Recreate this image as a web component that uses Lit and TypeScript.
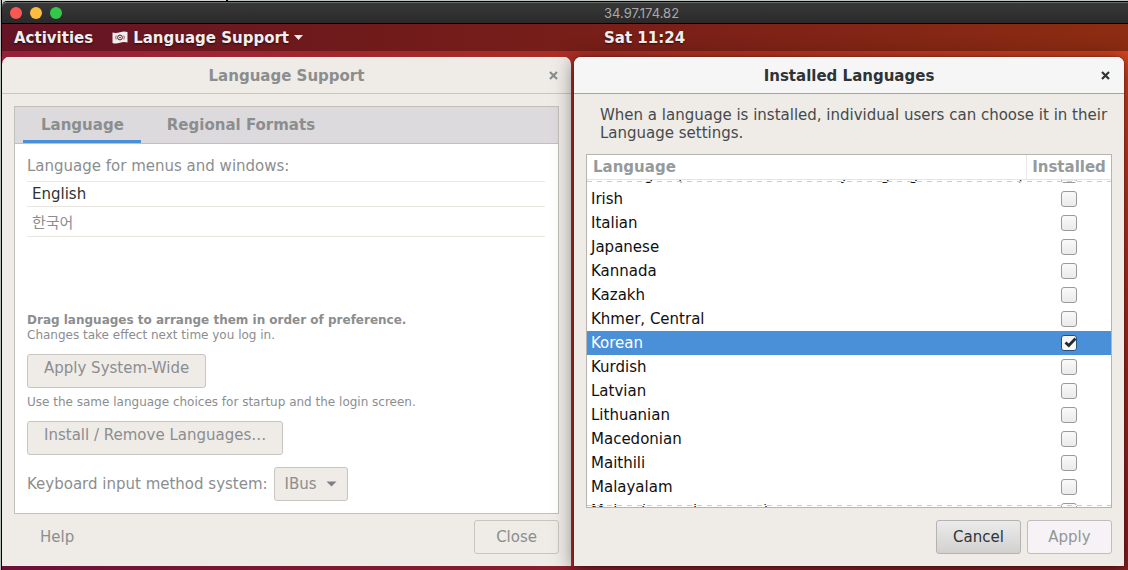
import { LitElement, html, css, svg } from "lit";
import { customElement, state } from "lit/decorators.js";

interface Lang {
  name: string;
  installed: boolean;
}

const closeIcon = svg`<svg width="9" height="9" viewBox="0 0 9 9" aria-hidden="true"><path d="M1 1 L8 8 M8 1 L1 8" fill="none" stroke="currentColor" stroke-width="2.2"/></svg>`;

@customElement("language-support")
export class LanguageSupport extends LitElement {
  static styles = css`
    :host {
      display: flex;
      flex-direction: column;
      background: #efebe7;
      color: #8b8e8f;
      border-radius: 7px 7px 0 0;
      overflow: hidden;
    }
    button, select {
      font: inherit;
      color: inherit;
      margin: 0;
    }
    .title {
      display: grid;
      grid-template-columns: 1fr auto 1fr;
      align-items: center;
      height: 37px;
      padding: 0 13px;
      border-bottom: 1px solid #c9c5c1;
      border-top: 1px solid #f8f6f4;
      box-sizing: border-box;
    }
    .title h1 {
      grid-column: 2;
      margin: 0;
      font-size: 15px;
    }
    .x {
      justify-self: end;
      display: flex;
      padding: 0;
      border: 0;
      background: none;
    }
    .body {
      flex: 1;
      display: flex;
      flex-direction: column;
      padding: 12px;
    }
    .book {
      flex: 1;
      display: flex;
      flex-direction: column;
      border: 1px solid #c3bfbb;
      background: #fff;
    }
    .tabs {
      display: flex;
      padding: 0 8px;
      background: #dddadd;
      border-bottom: 1px solid #c3bfbb;
    }
    .tab {
      height: 36px;
      padding: 0 17px 0 18px;
      border: 0;
      background: none;
      font-weight: bold;
      margin-right: 8px;
    }
    .on {
      box-shadow: inset 0 -3px #4a90d9;
    }
    .page {
      flex: 1;
      display: flex;
      flex-direction: column;
      align-items: flex-start;
      padding: 13px 12px 12px;
    }
    .langs {
      align-self: stretch;
      margin: 6px 1px 0 0;
      padding: 0;
      list-style: none;
      border-top: 1px solid #e8e8e4;
      min-height: 131px;
    }
    .langs li {
      display: flex;
      align-items: center;
      height: 24px;
      padding: 0 5px;
      border-bottom: 1px solid #e9e6df;
    }
    .langs .first { color: #2e3436; }
    .langs .ko { height: 29px; }
    p {
      margin: 0;
      line-height: 18px;
    }
    .small {
      font-size: 12px;
      line-height: 15px;
    }
    .strong { font-weight: bold; }
    .btn {
      height: 34px;
      padding: 0 16px;
      border: 1px solid #c8c4c0;
      border-radius: 3px;
      background: #efebe7;
    }
    .raised { padding-bottom: 6px; }
    .wide { margin: 11px 0 7px; }
    .install { margin: 11px 0 12px; }
    .method {
      display: flex;
      align-items: center;
      gap: 6px;
    }
    .pick {
      display: grid;
      align-items: center;
    }
    .pick select, .pick svg { grid-area: 1 / 1; }
    .pick select {
      appearance: none;
      width: 74px;
      padding: 0 10px;
    }
    .pick svg {
      justify-self: end;
      margin-right: 11px;
      pointer-events: none;
    }
    .foot {
      display: flex;
      justify-content: space-between;
      margin-top: 6px;
    }
    .flat {
      border-color: transparent;
      padding: 0 25px;
    }
    .close { padding: 0 21px; }
  `;

  render() {
    return html`
      <header class="title">
        <h1>Language Support</h1>
        <button class="x" aria-label="Close window">${closeIcon}</button>
      </header>
      <div class="body">
        <section class="book">
          <div class="tabs" role="tablist">
            <button class="tab on" role="tab" aria-selected="true">Language</button>
            <button class="tab" role="tab" aria-selected="false">Regional Formats</button>
          </div>
          <div class="page">
            <p>Language for menus and windows:</p>
            <ul class="langs">
              <li class="first">English</li>
              <li class="ko" lang="ko">한국어</li>
            </ul>
            <p class="small strong">Drag languages to arrange them in order of preference.</p>
            <p class="small">Changes take effect next time you log in.</p>
            <button class="btn raised wide">Apply System-Wide</button>
            <p class="small">Use the same language choices for startup and the login screen.</p>
            <button class="btn raised install">Install / Remove Languages…</button>
            <div class="method">
              <label for="method">Keyboard input method system:</label>
              <span class="pick">
                <select id="method" class="btn"><option>IBus</option></select>
                <svg width="11" height="6" viewBox="0 0 11 6" aria-hidden="true"><path d="M0.5 0.5 H10.5 L5.5 5.5 Z" fill="#7d8082"/></svg>
              </span>
            </div>
          </div>
        </section>
        <footer class="foot">
          <button class="btn flat">Help</button>
          <button class="btn close">Close</button>
        </footer>
      </div>
    `;
  }
}

@customElement("installed-languages")
export class InstalledLanguages extends LitElement {
  static styles = css`
    :host {
      display: flex;
      flex-direction: column;
      background: #efebe7;
      color: #2e3436;
      border-radius: 7px 7px 0 0;
      box-shadow: 0 3px 20px rgba(0, 0, 0, 0.5), 0 0 2px rgba(60, 0, 0, 0.6);
    }
    button {
      font: inherit;
      color: inherit;
    }
    .title {
      display: grid;
      grid-template-columns: 1fr auto 1fr;
      align-items: center;
      height: 37px;
      padding: 0 14px;
      background: #f6f6f6;
      border-top: 1px solid #fff;
      border-bottom: 1px solid #a5a2a0;
      border-radius: 7px 7px 0 0;
      box-sizing: border-box;
    }
    .title h1 {
      grid-column: 2;
      margin: 0;
      font-size: 15px;
    }
    .x {
      justify-self: end;
      display: flex;
      padding: 0;
      border: 0;
      background: none;
    }
    .body {
      flex: 1;
      display: flex;
      flex-direction: column;
      padding: 12px;
      min-height: 0;
    }
    .intro {
      margin: 0 0 12px;
      padding: 0 0 0 14px;
      line-height: 18px;
      color: #454a4c;
    }
    .list {
      flex: 1 1 0;
      min-height: 0;
      display: flex;
      flex-direction: column;
      border: 1px solid #b6b3b0;
      background: #fff;
      overflow: hidden;
    }
    .port {
      flex: 1 1 0;
      min-height: 0;
      display: flex;
      flex-direction: column;
      position: relative;
    }
    .view {
      flex: 1 1 0;
      min-height: 0;
      overflow: hidden;
    }
    .port::before, .port::after {
      content: "";
      position: absolute;
      left: 0;
      right: 0;
      height: 1px;
      background: repeating-linear-gradient(90deg, #ccccca 0 5px, #fff 5px 10px);
    }
    .port::before { top: 1px; }
    .port::after { bottom: 1px; }
    table {
      width: 100%;
      border-collapse: separate;
      border-spacing: 0;
      table-layout: fixed;
    }
    .mark-col { width: 85px; }
    th {
      height: 25px;
      padding: 0 6px;
      text-align: left;
      color: #969a9b;
      box-sizing: border-box;
      border-bottom: 1px solid #e6e4e0;
    }
    th + th { border-left: 1px solid #ece9e4; text-align: center; padding: 0; }
    td {
      height: 24px;
      padding: 0 4px;
      color: #101010;
      line-height: 18px;
      white-space: nowrap;
    }
    td + td { padding: 0; }
    .sel td { background: #4a90d9; color: #fff; }
    .mark { display: flex; justify-content: center; }
    input {
      appearance: none;
      width: 16px;
      height: 16px;
      margin: 0;
      border: 1px solid #9c9996;
      border-radius: 3px;
      background: linear-gradient(#fafafa, #ebe9eb);
      box-sizing: border-box;
    }
    input:checked {
      border-color: #28507c;
      background: url("data:image/svg+xml,%3Csvg xmlns='http://www.w3.org/2000/svg' viewBox='0 0 14 14'%3E%3Cpath d='M3.5 6.5 L6.8 9.5 L13.5 2.5' fill='none' stroke='%23252b2d' stroke-width='2.8'/%3E%3C/svg%3E"), #f7f7f7;
    }
    .foot {
      display: flex;
      justify-content: flex-end;
      gap: 6px;
      margin-top: 12px;
    }
    .btn {
      height: 34px;
      width: 85px;
      border: 1px solid #b5b2b0;
      border-radius: 3px;
      background: linear-gradient(#ebebeb, #d2d1d0);
      padding: 0;
    }
    .off { background: #f6f2f6; color: #939697; border-color: #c0bdbf; }
  `;

  @state() private langs: Lang[] = [
    "Interlingua (International Auxiliary Language Association)", "Irish", "Italian", "Japanese",
    "Kannada", "Kazakh", "Khmer, Central", "Korean", "Kurdish", "Latvian", "Lithuanian",
    "Macedonian", "Maithili", "Malayalam", "Malay (macrolanguage)",
  ].map((name) => ({ name, installed: name === "Korean" }));

  private toggle(lang: Lang) {
    this.langs = this.langs.map((l) => (l === lang ? { ...l, installed: !l.installed } : l));
  }

  protected firstUpdated() {
    const view = this.renderRoot.querySelector(".view");
    if (view) view.scrollTop = 17;
  }

  render() {
    return html`
      <header class="title">
        <h1>Installed Languages</h1>
        <button class="x" aria-label="Close window">${closeIcon}</button>
      </header>
      <div class="body">
        <p class="intro">When a language is installed, individual users can choose it in their Language settings.</p>
        <div class="list">
          <table>
            <colgroup><col /><col class="mark-col" /></colgroup>
            <thead><tr><th>Language</th><th>Installed</th></tr></thead>
          </table>
          <div class="port">
            <div class="view">
              <table>
                <colgroup><col /><col class="mark-col" /></colgroup>
                <tbody>
                  ${this.langs.map((l, i) => html`
                    <tr class=${l.name === "Korean" ? "sel" : ""}>
                      <td><label for="lang-${i}">${l.name}</label></td>
                      <td><span class="mark"><input type="checkbox" id="lang-${i}" .checked=${l.installed} @change=${() => this.toggle(l)} /></span></td>
                    </tr>`)}
                </tbody>
              </table>
            </div>
          </div>
        </div>
        <footer class="foot">
          <button class="btn">Cancel</button>
          <button class="btn off" disabled>Apply</button>
        </footer>
      </div>
    `;
  }
}

@customElement("app-root")
export class AppRoot extends LitElement {
  static styles = css`
    :host {
      display: flex;
      flex-direction: column;
      height: 100vh;
      box-sizing: border-box;
      padding: 2px 0 0 2px;
      background: linear-gradient(90deg, #b9bdb9 0 1px, #000 1px 2px, #d3d8d3 2px 226px, #000 226px 228px, #c3c9c3 228px);
      font-family: "DejaVu Sans", "Noto Sans CJK KR", sans-serif;
      font-size: 15px;
      overflow: hidden;
    }
    .frame, .bar {
      display: grid;
      grid-template-columns: 602fr 524fr;
      align-items: center;
    }
    .frame {
      height: 22px;
      box-sizing: border-box;
      background: linear-gradient(#383838, #2a2a2a);
      border-top: 1px solid #6b6b6b;
      border-bottom: 1px solid #000;
      border-radius: 5px 0 0 0;
      box-shadow: 0 -1px #000;
    }
    .lights { display: flex; gap: 8px; padding-left: 8px; }
    .light { width: 12px; height: 12px; border-radius: 50%; }
    .red { background: #fc5753; }
    .amber { background: #fdbc40; }
    .green { background: #34c84a; }
    .host {
      font-family: Inter, sans-serif;
      font-size: 13px;
      color: #a9a9a9;
    }
    .desk {
      flex: 1;
      min-height: 0;
      display: flex;
      flex-direction: column;
      background:
        linear-gradient(90deg, #6d1038, #8a1f2c 50%, #84201f) bottom / 100% 4px no-repeat,
        linear-gradient(#d8451f, #a92d1e 50%, #84201f) right / 8px 100% no-repeat,
        linear-gradient(90deg, #97203a, #a52a2a 40%, #b03222 60%, #cf4220);
    }
    .bar {
      height: 27px;
      background: linear-gradient(90deg, #651426, #6f1a1b 30%, #7b2018 60%, #8c2c12);
      color: #f2eeee;
      font-weight: bold;
      text-shadow: 0 1px 2px rgba(0, 0, 0, 0.6);
    }
    .menus { display: flex; align-items: center; gap: 19px; padding-left: 12px; }
    .bar button {
      display: flex;
      align-items: center;
      gap: 5px;
      padding: 0;
      border: 0;
      background: none;
      color: inherit;
      font: inherit;
      text-shadow: inherit;
    }
    .windows {
      flex: 1;
      min-height: 0;
      display: grid;
      grid-template-columns: 569fr 550fr;
      gap: 3px;
      padding: 6px 4px 4px 0;
    }
  `;

  render() {
    return html`
      <header class="frame">
        <div class="lights"><span class="light red"></span><span class="light amber"></span><span class="light green"></span></div>
        <span class="host">34.97.174.82</span>
      </header>
      <div class="desk">
        <nav class="bar">
          <div class="menus">
            <button>Activities</button>
            <button>
              <svg width="16" height="13" viewBox="0 0 16 13" aria-hidden="true">
                <path d="M0.5 1.5 Q4 2.5 8 1.2 T15.5 1 V11.5 Q12 10.5 8 11.8 T0.5 12 Z" fill="#efeded"/>
                <circle cx="8" cy="6.5" r="2.4" fill="none" stroke="#6b1a1c" stroke-width="1"/>
                <circle cx="8" cy="6.5" r="0.8" fill="#6b1a1c"/>
                <path d="M4.2 4.6 Q3.2 6.5 4.2 8.4 M11.8 4.6 Q12.8 6.5 11.8 8.4" fill="none" stroke="#6b1a1c" stroke-width="0.7"/>
              </svg>
              Language Support
              <svg width="9" height="5" viewBox="0 0 9 5" aria-hidden="true"><path d="M0 0 H9 L4.5 5 Z" fill="#f2eeee"/></svg>
            </button>
          </div>
          <time>Sat 11:24</time>
        </nav>
        <main class="windows">
          <language-support></language-support>
          <installed-languages></installed-languages>
        </main>
      </div>
    `;
  }
}
